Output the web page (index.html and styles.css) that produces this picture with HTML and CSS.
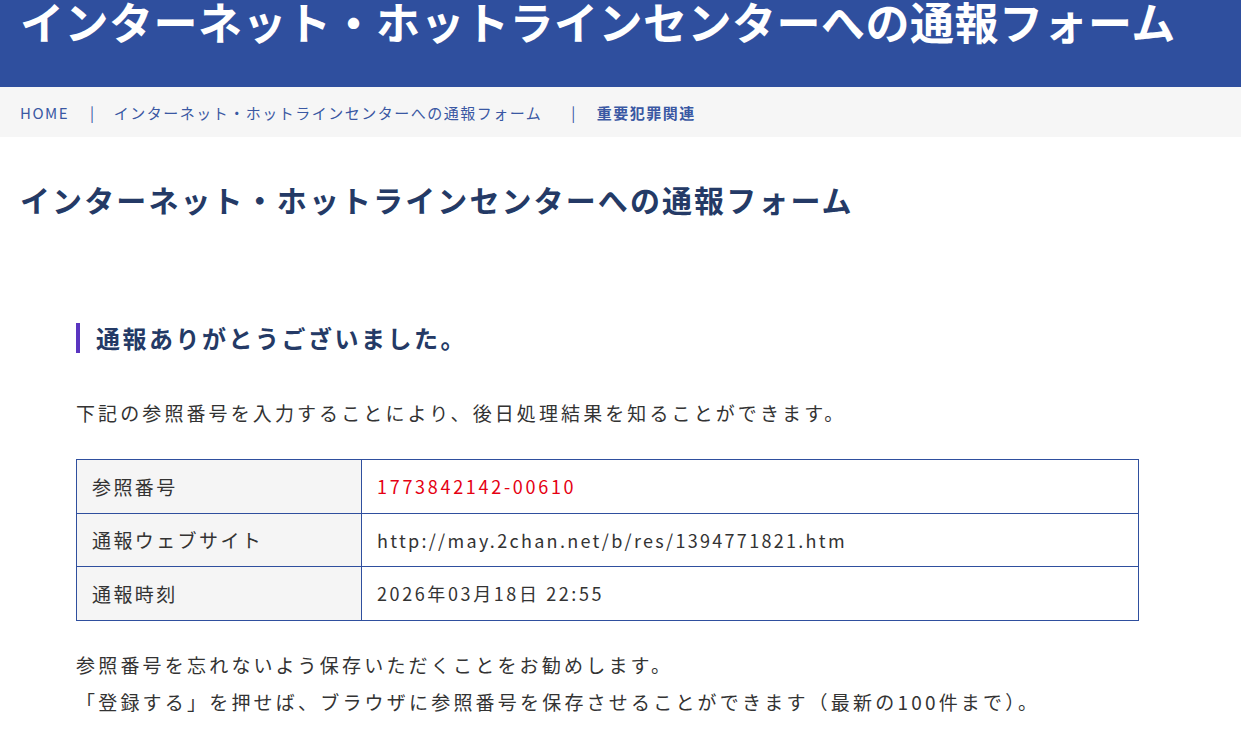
FILE: index.html
```html
<!DOCTYPE html>
<html lang="ja">
<head>
<meta charset="utf-8">
<title>インターネット・ホットラインセンターへの通報フォーム</title>
<link rel="stylesheet" href="styles.css">
</head>
<body>
<header class="site-header">
  <h1 class="site-title">インターネット・ホットラインセンターへの通報フォーム</h1>
</header>
<nav class="breadcrumb">
  <a class="crumb" href="#">HOME</a>
  <span class="sep">|</span>
  <a class="crumb" href="#">インターネット・ホットラインセンターへの通報フォーム</a>
  <span class="sep sep-wide">|</span>
  <span class="crumb current">重要犯罪関連</span>
</nav>
<main class="main">
  <h2 class="page-title">インターネット・ホットラインセンターへの通報フォーム</h2>
  <section class="content">
    <h3 class="section-title">通報ありがとうございました。</h3>
    <p class="lead">下記の参照番号を入力することにより、後日処理結果を知ることができます。</p>
    <table class="result">
      <tr>
        <th>参照番号</th>
        <td class="ref">1773842142-00610</td>
      </tr>
      <tr>
        <th>通報ウェブサイト</th>
        <td class="url">http://may.2chan.net/b/res/1394771821.htm</td>
      </tr>
      <tr>
        <th>通報時刻</th>
        <td>2026年03月18日 22:55</td>
      </tr>
    </table>
    <p class="note">参照番号を忘れないよう保存いただくことをお勧めします。<br>「登録する」を押せば、ブラウザに参照番号を保存させることができます（最新の100件まで）。</p>
  </section>
</main>
</body>
</html>
```

FILE: styles.css
```css
* { box-sizing: border-box; }
html, body { margin: 0; padding: 0; }
body {
  font-family: "Noto Sans CJK JP", "Noto Sans", sans-serif;
  color: #333;
  background: #fff;
}
.site-header {
  background: #2f4f9e;
  height: 87px;
  padding: 0 20px;
}
.site-title {
  margin: 0;
  color: #fff;
  font-size: 44px;
  line-height: 44px;
  font-weight: 700;
  letter-spacing: 0.5px;
  white-space: nowrap;
  position: relative;
  top: -1px;
}
.breadcrumb {
  background: #f6f6f6;
  height: 50px;
  padding: 0 20px;
  display: flex;
  align-items: center;
  font-size: 15px;
  letter-spacing: 0.1em;
  color: #3a58a3;
}
.crumb { color: #3a58a3; text-decoration: none; }
.current { font-weight: 700; }
.sep { margin: 0 18px 0 21px; color: #3a58a3; }
.sep-wide { margin: 0 20px 0 29px; }
.main { padding: 0 20px; }
.page-title {
  margin: 41px 0 0;
  font-size: 30px;
  line-height: 42px;
  font-weight: 700;
  letter-spacing: 2.1px;
  color: #243a66;
}
.content {
  margin: 103px 82px 0 56px;
}
.section-title {
  margin: 0;
  border-left: 4px solid #5a35c0;
  padding-left: 16px;
  font-size: 24px;
  line-height: 30px;
  font-weight: 700;
  letter-spacing: 2.5px;
  color: #243a66;
}
.lead {
  margin: 42px 0 0;
  font-size: 19px;
  line-height: 36px;
  letter-spacing: 3.1px;
}
.result {
  margin-top: 28px;
  width: 100%;
  border-collapse: collapse;
  font-size: 18px;
}
.result th, .result td {
  border: 1px solid #2f4f9e;
  height: 53.5px;
  padding: 0 15px;
  text-align: left;
  font-weight: 400;
}
.result th {
  width: 285px;
  background: #f5f5f5;
  font-size: 19px;
  letter-spacing: 2.4px;
}
.result td {
  letter-spacing: 2.6px;
  color: #333;
}
.result td.url { letter-spacing: 2.3px; }
.result td.ref { color: #e50012; letter-spacing: 2.7px; }
.note {
  margin: 25px 0 0;
  font-size: 19px;
  line-height: 37px;
  letter-spacing: 3.2px;
}
```
